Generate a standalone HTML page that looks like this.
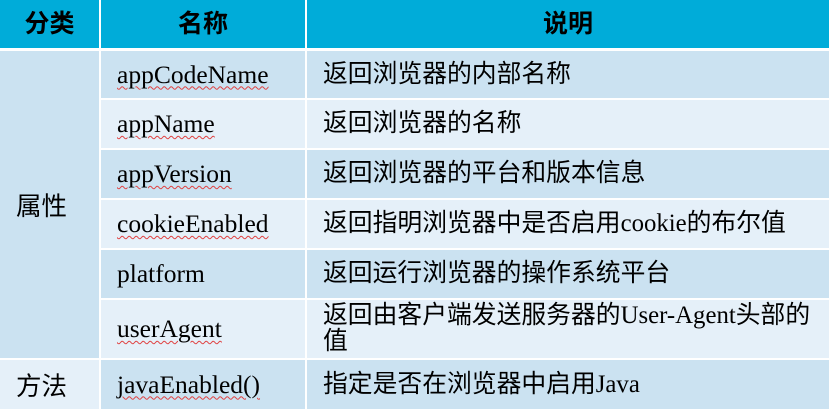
<!DOCTYPE html>
<html><head><meta charset="utf-8"><style>
body{margin:0;width:829px;height:409px;background:#fff;position:relative;overflow:hidden;font-family:"Liberation Serif","Noto Sans CJK SC",serif;font-size:25.5px;color:#000}
.c{position:absolute;box-sizing:border-box;display:flex;align-items:center;padding-left:16px;line-height:26px}
.h{background:#00acd9;font-family:"Liberation Sans","Noto Sans CJK SC",sans-serif;font-weight:bold;justify-content:center;padding:0;font-size:25px}
.d{background:#cbe2f1}.l{background:#e5f0f9}
.s{font-family:"Noto Sans CJK SC",sans-serif}
.u{text-decoration:underline wavy #e04040;text-decoration-thickness:1px;text-underline-offset:3px}
.t{font-family:"Liberation Serif","Noto Sans CJK SC",serif;font-size:24.8px}
</style></head><body>
<div class="c h" style="left:0;top:0;width:99px;height:48px">分类</div>
<div class="c h" style="left:101px;top:0;width:204px;height:48px">名称</div>
<div class="c h" style="left:307px;top:0;width:522px;height:48px">说明</div>

<div class="c d s" style="left:0;top:51px;width:99px;height:307px">属性</div>
<div class="c l s" style="left:0;top:360px;width:99px;height:49px">方法</div>

<div class="c d" style="left:101px;top:51px;width:204px;height:47px"><span class="u">appCodeName</span></div>
<div class="c d t" style="left:307px;top:51px;width:522px;height:47px">返回浏览器的内部名称</div>
<div class="c l" style="left:101px;top:100px;width:204px;height:48px"><span class="u">appName</span></div>
<div class="c l t" style="left:307px;top:100px;width:522px;height:48px">返回浏览器的名称</div>
<div class="c d" style="left:101px;top:150px;width:204px;height:48px"><span class="u">appVersion</span></div>
<div class="c d t" style="left:307px;top:150px;width:522px;height:48px">返回浏览器的平台和版本信息</div>
<div class="c l" style="left:101px;top:200px;width:204px;height:48px"><span class="u">cookieEnabled</span></div>
<div class="c l t" style="left:307px;top:200px;width:522px;height:48px">返回指明浏览器中是否启用cookie的布尔值</div>
<div class="c d" style="left:101px;top:250px;width:204px;height:48px">platform</div>
<div class="c d t" style="left:307px;top:250px;width:522px;height:48px">返回运行浏览器的操作系统平台</div>
<div class="c l" style="left:101px;top:300px;width:204px;height:58px"><span class="u">userAgent</span></div>
<div class="c l t" style="left:307px;top:300px;width:522px;height:58px;padding-right:4px">返回由客户端发送服务器的User-Agent头部的<br>值</div>
<div class="c d" style="left:101px;top:360px;width:204px;height:49px"><span class="u">javaEnabled()</span></div>
<div class="c d t" style="left:307px;top:360px;width:522px;height:49px">指定是否在浏览器中启用Java</div>
</body></html>
